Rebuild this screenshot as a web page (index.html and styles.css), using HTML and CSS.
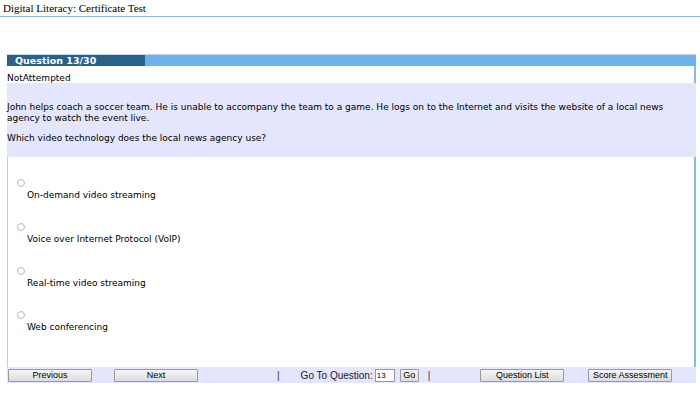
FILE: index.html
```html
<!DOCTYPE html>
<html lang="en">
<head>
  <meta charset="UTF-8" />
  <title>Digital Literacy: Certificate Test</title>
  <link rel="stylesheet" href="styles.css">
</head>
<body>

<header class="page-title">Digital Literacy: Certificate Test</header>

<div class="quiz">
  <div class="q-head">
    <div class="q-num">Question 13/30</div>
  </div>
  <div class="q-status">NotAttempted</div>
  <div class="q-stem">
    <p>John helps coach a soccer team. He is unable to accompany the team to a game. He logs on to the Internet and visits the website of a local news agency to watch the event live.</p>
    <p>Which video technology does the local news agency use?</p>
  </div>
  <div class="q-options">
    <label class="option"><input type="radio" name="answer"><span>On-demand video streaming</span></label>
    <label class="option"><input type="radio" name="answer"><span>Voice over Internet Protocol (VoIP)</span></label>
    <label class="option"><input type="radio" name="answer"><span>Real-time video streaming</span></label>
    <label class="option"><input type="radio" name="answer"><span>Web conferencing</span></label>
  </div>
  <div class="q-nav">
    <button class="btn btn-prev">Previous</button>
    <button class="btn btn-next">Next</button>
    <span class="sep sep-1">|</span>
    <span class="goto">Go To Question:</span>
    <input class="goto-input" type="text" value="13">
    <button class="btn btn-go">Go</button>
    <span class="sep sep-2">|</span>
    <button class="btn btn-list">Question List</button>
    <button class="btn btn-score">Score Assessment</button>
  </div>
</div>

</body>
</html>
```

FILE: styles.css
```css
body {
  margin: 0;
  padding: 0;
  background-color: #fff;
  color: #000;
  font-family: 'DejaVu Sans', Verdana, sans-serif;
  font-size: 9px;
}
.page-title {
  font-family: 'Liberation Serif', 'Times New Roman', serif;
  font-size: 11px;
  height: 16px;
  line-height: 17px;
  padding-left: 3px;
  border-bottom: 1px solid #8fbbe2;
}
.quiz {
  margin: 37px 4px 0 7px;
}
.q-head {
  height: 11px;
  background-color: #6fb1eb;
  border-top: 1px solid #b8d8f4;
  display: flex;
}
.q-num {
  width: 130px;
  padding-left: 8px;
  background-color: #2a6188;
  color: #fff;
  font-weight: bold;
  font-size: 9.5px;
  line-height: 12px;
}
.q-status {
  height: 17px;
  line-height: 25px;
  border-right: 2px solid #7fbdf0;
}
.q-stem {
  background-color: #e3e6fc;
  height: 74px;
  padding-top: 19px;
  box-sizing: border-box;
  padding-right: 20px;
}
.q-stem p {
  margin: 0 0 9px 0;
  line-height: 11px;
}
.q-options {
  height: 210px;
  box-sizing: border-box;
  padding: 21px 0 0 9px;
  border-left: 1px solid #a9d2f5;
  border-right: 2px solid #7fbdf0;
  display: flex;
  flex-direction: column;
}
.option {
  display: flex;
  flex-direction: column;
  align-items: flex-start;
  height: 44px;
}
.option input {
  margin: 1px 0 0 0;
  width: 8px;
  height: 8px;
  opacity: 0.5;
}
.option span {
  margin-left: 10px;
  margin-top: 3px;
}
.q-nav {
  height: 16px;
  background-color: #e3e6fc;
  display: flex;
  align-items: center;
  font-family: 'Liberation Sans', Arial, sans-serif;
}
.btn {
  height: 13px;
  width: 84px;
  padding: 0;
  font-family: 'Liberation Sans', Arial, sans-serif;
  font-size: 9px;
  color: #000;
  background: linear-gradient(#f6f6f6, #dcdcdc);
  border: 1px solid #9a9a9a;
  border-radius: 1px;
}
.btn-prev {
  margin-left: 1px;
}
.btn-next {
  margin-left: 22px;
}
.sep {
  font-size: 10px;
  color: #333;
}
.sep-1 {
  margin-left: 79px;
}
.goto {
  margin-left: 21px;
  font-size: 10px;
  color: #222;
}
.goto-input {
  margin-left: 2px;
  width: 20px;
  height: 13px;
  box-sizing: border-box;
  padding: 0 1px;
  font-size: 8px;
  font-family: 'Liberation Sans', Arial, sans-serif;
  border: 1px solid #999;
}
.btn-go {
  width: 19px;
  margin-left: 5px;
}
.sep-2 {
  margin-left: 9px;
}
.btn-list {
  margin-left: 50px;
}
.btn-score {
  margin-left: 24px;
}
```
